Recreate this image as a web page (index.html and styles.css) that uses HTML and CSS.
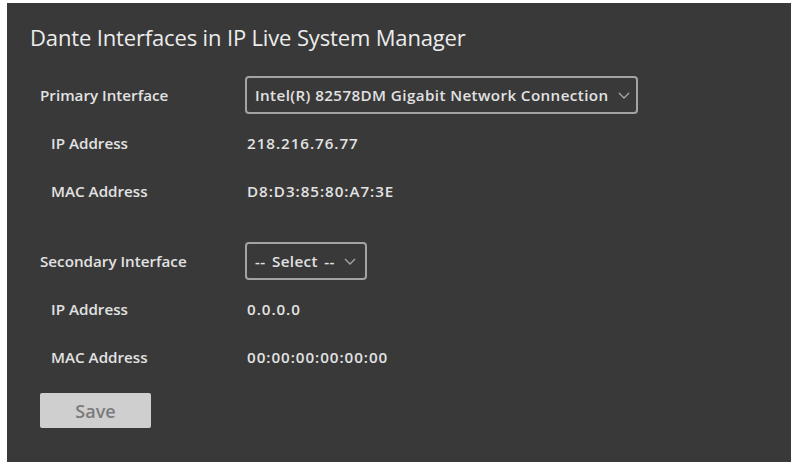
FILE: index.html
```html
<!DOCTYPE html>
<html lang="en">
<head>
<meta charset="utf-8">
<title>Dante Interfaces</title>
<link rel="stylesheet" href="styles.css">
</head>
<body>
<div class="panel">
  <h1 class="title">Dante Interfaces in IP Live System Manager</h1>
  <div class="form">
    <div class="row">
      <div class="label">Primary Interface</div>
      <div class="select select-wide">
        <span class="select-text">Intel(R) 82578DM Gigabit Network Connection</span>
        <svg class="chev" width="12" height="7" viewBox="0 0 12 7"><path d="M1 1 L6 6 L11 1" fill="none" stroke="#a9a9a9" stroke-width="1.3"/></svg>
      </div>
    </div>
    <div class="row">
      <div class="label sub">IP Address</div>
      <div class="value">218.216.76.77</div>
    </div>
    <div class="row">
      <div class="label sub">MAC Address</div>
      <div class="value">D8:D3:85:80:A7:3E</div>
    </div>
    <div class="row group">
      <div class="label">Secondary Interface</div>
      <div class="select">
        <span class="select-text placeholder">-- Select --</span>
        <svg class="chev" width="12" height="7" viewBox="0 0 12 7"><path d="M1 1 L6 6 L11 1" fill="none" stroke="#a9a9a9" stroke-width="1.3"/></svg>
      </div>
    </div>
    <div class="row">
      <div class="label sub">IP Address</div>
      <div class="value">0.0.0.0</div>
    </div>
    <div class="row">
      <div class="label sub">MAC Address</div>
      <div class="value">00:00:00:00:00:00</div>
    </div>
    <div class="actions">
      <button class="save" type="button">Save</button>
    </div>
  </div>
</div>
</body>
</html>
```

FILE: styles.css
```css
html, body {
  margin: 0;
  padding: 0;
  background: #ffffff;
  height: 100%;
}
body {
  padding: 3px 2px 0 7px;
  box-sizing: border-box;
  font-family: "Open Sans", "Noto Sans", sans-serif;
}
.panel {
  background: #393939;
  height: 100%;
  box-sizing: border-box;
  padding: 20px 0 0 33px;
}
.title {
  margin: 0 0 0 -10px;
  font-size: 22px;
  font-weight: 400;
  line-height: 28px;
  color: #ececec;
  letter-spacing: -0.15px;
}
.form {
  margin-top: 20px;
  display: flex;
  flex-direction: column;
}
.row {
  display: flex;
  align-items: center;
  height: 48px;
}
.row.group {
  margin-top: 22px;
}
.label {
  width: 205px;
  flex: none;
  font-size: 15.2px;
  font-weight: 600;
  color: #e2e2e2;
}
.label.sub {
  padding-left: 11px;
  box-sizing: border-box;
}
.value {
  padding-left: 2px;
  font-size: 15.2px;
  font-weight: 600;
  color: #e2e2e2;
  letter-spacing: 0.95px;
}
.select {
  box-sizing: border-box;
  height: 38px;
  border: 2px solid #a3a3a3;
  border-radius: 4px;
  display: flex;
  align-items: center;
  padding: 0 8px 0 8px;
  gap: 9px;
  width: 122px;
}
.select-wide {
  width: 393px;
}
.select-text {
  font-size: 15.2px;
  font-weight: 600;
  color: #e2e2e2;
  letter-spacing: 0.4px;
  white-space: nowrap;
}
.select-text.placeholder {
  word-spacing: 2px;
}
.chev {
  flex: none;
}
.actions {
  margin-top: 12px;
}
.save {
  width: 111px;
  height: 35px;
  border: none;
  border-radius: 2px;
  background: #cfcfcf;
  color: #7b7b7b;
  font-family: "Open Sans", "Noto Sans", sans-serif;
  font-size: 18px;
  font-weight: 600;
  padding: 0;
}
```
